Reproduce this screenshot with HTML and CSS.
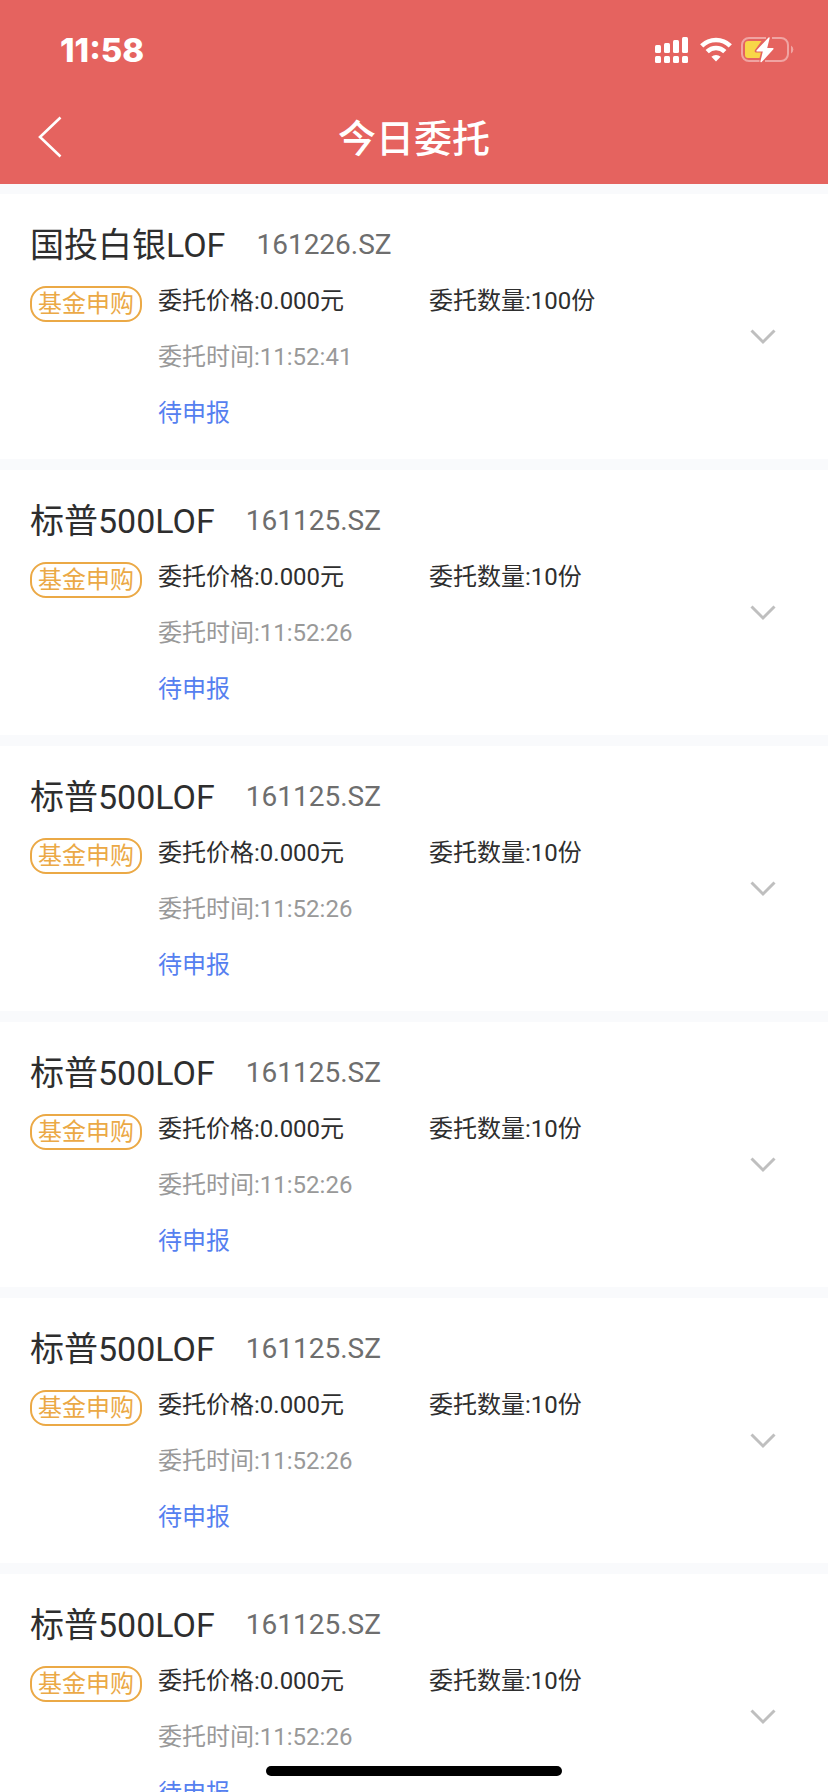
FILE: index.html
```html
<!DOCTYPE html>
<html lang="zh-CN">
<head>
<meta charset="utf-8">
<meta name="viewport" content="width=device-width, initial-scale=1">
<title>今日委托</title>
<link rel="stylesheet" href="styles.css">
</head>
<body>
<div class="app">
  <header class="header">
    <div class="status-bar">
      <time class="clock">11:58</time>
      <div class="status-icons">
        <svg class="signal" width="33" height="26" viewBox="0 0 33 26" fill="#fff" aria-hidden="true">
          <rect x="0" y="8" width="6" height="8" rx="1.5"/><rect x="9" y="6" width="6" height="10" rx="1.5"/><rect x="18" y="3" width="6" height="13" rx="1.5"/><rect x="27" y="0" width="6" height="16" rx="1.5"/>
          <rect x="0" y="19" width="6" height="7" rx="1.5"/><rect x="9" y="19" width="6" height="7" rx="1.5"/><rect x="18" y="19" width="6" height="7" rx="1.5"/><rect x="27" y="19" width="6" height="7" rx="1.5"/>
        </svg>
        <svg class="wifi" width="32" height="26" viewBox="0 0 32 26" aria-hidden="true">
          <g fill="none" stroke="#fff" stroke-width="4.6">
            <path d="M1.700 8.900a20.400 20.400 0 0 1 28.600 0"/>
            <path d="M7.200 14.600a12.600 12.600 0 0 1 17.600 0"/>
          </g>
          <path d="M16 24.400l-4.600-4.600a6.600 6.600 0 0 1 9.200 0z" fill="#fff"/>
        </svg>
        <svg class="battery" width="54" height="26" viewBox="0 0 54 26" aria-hidden="true">
          <g fill="none" stroke="#fff" stroke-opacity=".42" stroke-width="2">
            <path d="M25 1H8a7 7 0 0 0-7 7v9a7 7 0 0 0 7 7h10.500"/>
            <path d="M31 1h9a7 7 0 0 1 7 7v9a7 7 0 0 1-7 7H24"/>
          </g>
          <path d="M50 8.500a4.600 4.600 0 0 1 0 8z" fill="#fff" fill-opacity=".42"/>
          <path d="M20.500 4H7a3 3 0 0 0-3 3v11a3 3 0 0 0 3 3h11.500l1.500-5.500h-5q-2-.5-1-2.500z" fill="#f8d648"/>
          <path d="M27.500.4L15.600 13.200q-.6 1.200.6 1.300h5.600L19.400 24.600q.1 1.200 1.200.5L32.400 12.300q.6-1.200-.6-1.300h-5.600L28.700.9q0-1.200-1.200-.5z" fill="#fff"/>
        </svg>
      </div>
    </div>
    <div class="nav-bar">
      <button class="back" type="button" aria-label="返回">
        <svg width="24" height="42" viewBox="0 0 24 42" fill="none" stroke="#fff" stroke-width="2.600" aria-hidden="true"><path d="M22.500 1.500L2 21l20.500 19.500"/></svg>
      </button>
      <h1 class="page-title">今日委托</h1>
    </div>
  </header>
  <main class="orders" id="orders"></main>
  <div class="home-indicator"></div>
</div>
<template id="order-template">
  <article class="order">
    <div class="order-content">
      <h2 class="order-head"><span class="name"></span><span class="code"></span></h2>
      <div class="order-body">
        <span class="tag">基金申购</span>
        <div class="details">
          <div class="detail-row"><span class="price">委托价格:0.000元</span><span class="quantity"></span></div>
          <div class="placed"></div>
          <div class="state">待申报</div>
        </div>
      </div>
    </div>
    <button class="expand" type="button" aria-label="展开">
      <svg width="26" height="16" viewBox="0 0 26 16" fill="none" stroke="#bfbfbf" stroke-width="3" aria-hidden="true"><path d="M1.500 1.500L13 13l11.500-11.500"/></svg>
    </button>
  </article>
</template>
<script src="orders.js"></script>
</body>
</html>
```
FILE: styles.css
```css
* {
  box-sizing: border-box;
}

body {
  margin: 0;
  background: #f9fafc;
  color: #2e2e2e;
  font-family: Roboto, "Noto Sans CJK SC", sans-serif;
}

button {
  padding: 0;
  border: 0;
  background: none;
  cursor: pointer;
}

svg {
  display: block;
}

.app {
  display: flex;
  flex-direction: column;
  height: 100vh;
  overflow: hidden;
}

.header {
  flex: none;
  background: #e5635f;
  color: #fff;
}

.status-bar {
  display: flex;
  align-items: center;
  justify-content: space-between;
  height: 100px;
  padding: 0 33px 0 60px;
}

.clock {
  font-family: Inter, sans-serif;
  font-size: 33px;
  font-weight: 800;
}

.status-icons {
  display: flex;
  align-items: center;
}

.wifi {
  margin: 0 9px 0 12px;
}

.nav-bar {
  display: grid;
  grid-template-columns: 100px 1fr 100px;
  align-items: center;
  height: 84px;
  padding-bottom: 10px;
}

.back {
  padding-left: 38px;
  justify-self: start;
}

.page-title {
  margin: 0;
  padding-top: 4px;
  font-size: 38px;
  font-weight: 500;
  line-height: 56px;
  text-align: center;
}

.orders {
  flex: 1;
  min-height: 0;
  overflow: hidden;
  padding-top: 10px;
}

.order {
  display: flex;
  justify-content: space-between;
  margin-bottom: 11px;
  padding: 30px 52px 31px 30px;
  background: #fff;
}

.order-content {
  flex: 1;
}

.order-head {
  display: flex;
  align-items: center;
  gap: 31px;
  margin: 0 0 20px;
  font-weight: 400;
  line-height: 42px;
}

.name {
  font-size: 34px;
}

.code {
  color: #6e6e6e;
  font-size: 28px;
}

.order-body {
  display: flex;
  align-items: flex-start;
  gap: 16px;
  font-size: 24px;
  line-height: 30px;
}

.tag {
  flex: none;
  padding: 1px 6px;
  border: 2px solid #eba946;
  border-radius: 16px;
  color: #eba946;
}

.details {
  display: flex;
  flex: 1;
  flex-direction: column;
  gap: 26px;
}

.detail-row {
  display: grid;
  grid-template-columns: 271px 1fr;
}

.placed {
  color: #999;
}

.state {
  color: #5580f0;
}

.expand {
  padding-top: 22px;
}

.home-indicator {
  position: fixed;
  bottom: 16px;
  left: 50%;
  width: 296px;
  height: 10px;
  border-radius: 5px;
  background: #000;
  transform: translateX(-50%);
}
```
FILE: orders.js
```js
const sp500 = { name: '标普500LOF', code: '161125.SZ', quantity: 10, time: '11:52:26' };
const orders = [
  { name: '国投白银LOF', code: '161226.SZ', quantity: 100, time: '11:52:41' },
  sp500, sp500, sp500, sp500, sp500
];

const list = document.getElementById('orders');
const template = document.getElementById('order-template');

for (const order of orders) {
  const item = template.content.cloneNode(true);
  item.querySelector('.name').textContent = order.name;
  item.querySelector('.code').textContent = order.code;
  item.querySelector('.quantity').textContent = `委托数量:${order.quantity}份`;
  item.querySelector('.placed').textContent = `委托时间:${order.time}`;
  list.append(item);
}
```
